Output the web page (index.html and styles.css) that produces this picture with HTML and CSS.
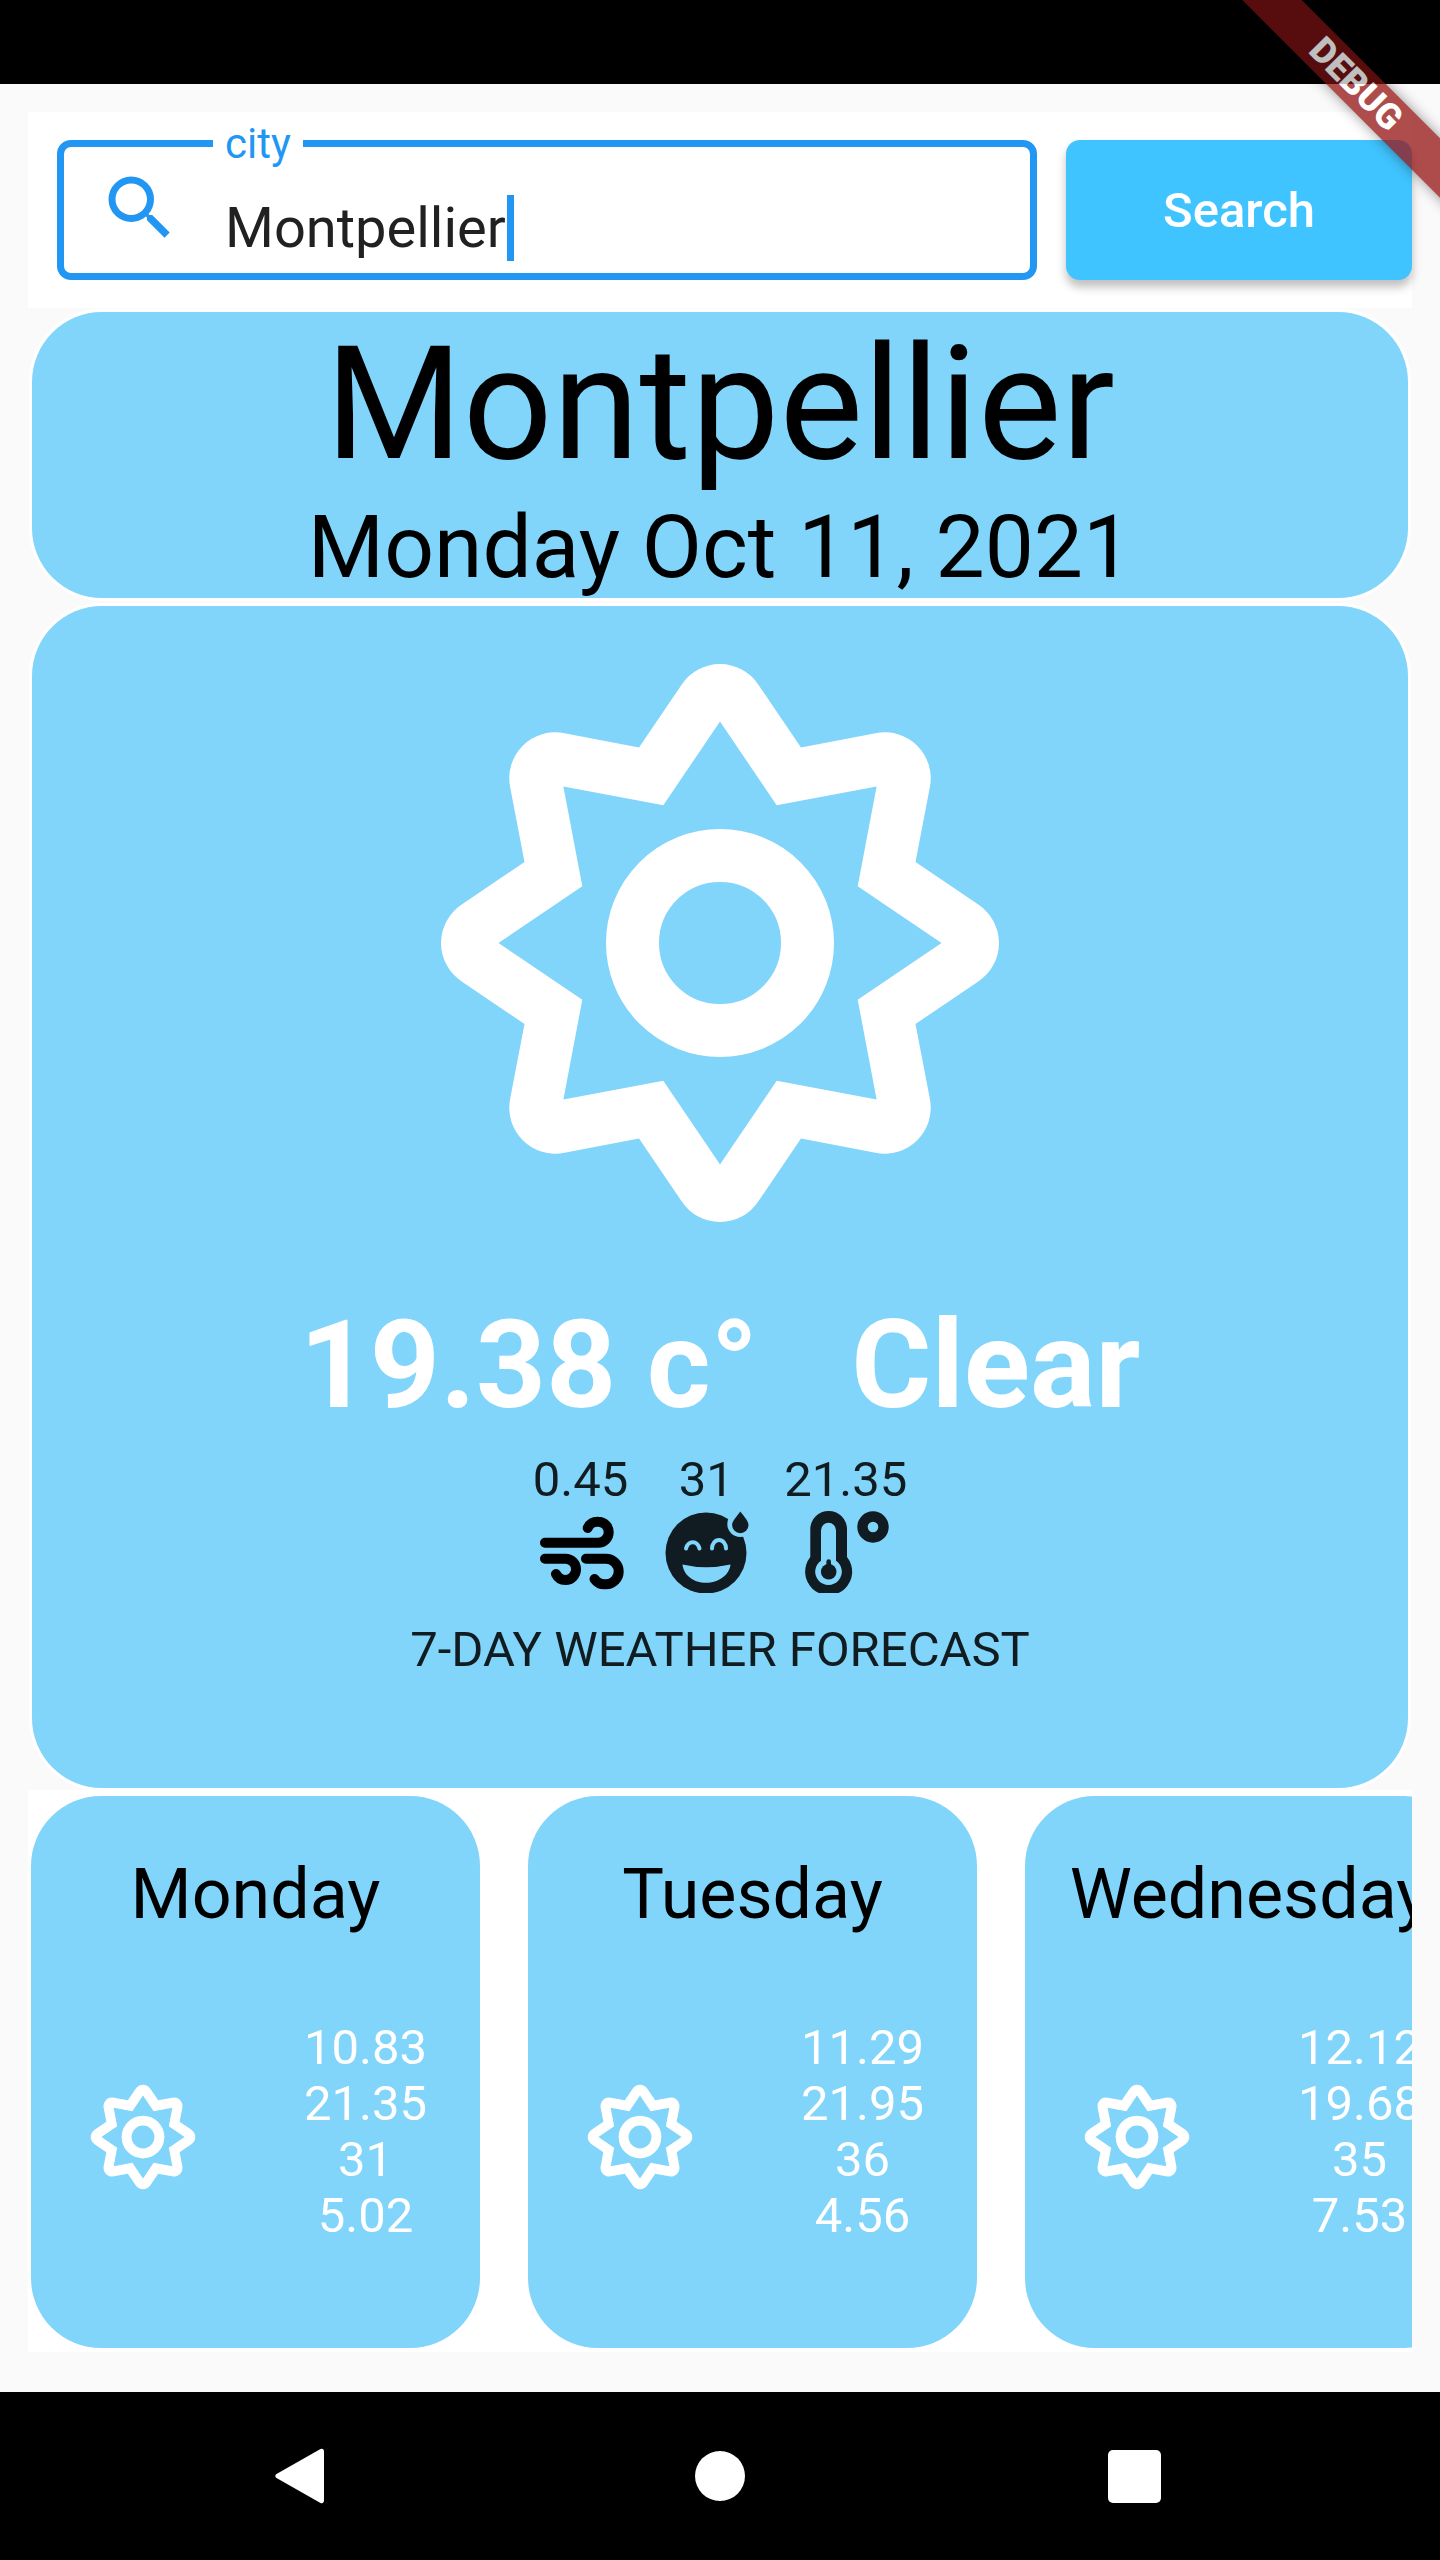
FILE: index.html
```html
<!DOCTYPE html>
<html lang="en">
<head>
    <meta charset="UTF-8">
    <meta name="viewport" content="width=device-width, initial-scale=1.0">
    <title>Weather</title>
    <link rel="stylesheet" href="styles.css">
</head>
<body>
    <svg class="icon-defs" width="0" height="0">
        <symbol id="sun" viewBox="-320 -320 640 640">
            <path fill="#fff" fill-rule="evenodd" d="M-38.4 -258.3A46 46 0 0 1 38.4 -258.3L81 -195.5L155.5 -209.8A46 46 0 0 1 209.8 -155.5L195.5 -81L258.3 -38.4A46 46 0 0 1 258.3 38.4L195.5 81L209.8 155.5A46 46 0 0 1 155.5 209.8L81 195.5L38.4 258.3A46 46 0 0 1 -38.4 258.3L-81 195.5L-155.5 209.8A46 46 0 0 1 -209.8 155.5L-195.5 81L-258.3 38.4A46 46 0 0 1 -258.3 -38.4L-195.5 -81L-209.8 -155.5A46 46 0 0 1 -155.5 -209.8L-81 -195.5ZM0 -221.5L-56.7 -137.7L-156.6 -156.6L-137.7 -56.7L-221.5 0L-137.7 56.7L-156.6 156.6L-56.7 137.7L0 221.5L56.7 137.7L156.6 156.6L137.7 56.7L221.5 0L137.7 -56.7L156.6 -156.6L56.7 -137.7Z"/>
            <circle r="87.5" fill="none" stroke="#fff" stroke-width="53"/>
        </symbol>
    </svg>

    <div class="status-bar"></div>

    <main class="screen">
        <section class="search-row">
            <div class="city-field">
                <span class="city-label">city</span>
                <svg class="search-icon" viewBox="0 0 24 24"><path fill="#2196f3" d="M15.5 14h-.79l-.28-.27A6.47 6.47 0 0 0 16 9.5 6.5 6.5 0 1 0 9.5 16c1.61 0 3.09-.59 4.23-1.57l.27.28v.79l5 4.99L20.49 19l-4.99-5zm-6 0C7.01 14 5 11.99 5 9.5S7.01 5 9.5 5 14 7.01 14 9.5 11.99 14 9.5 14z"/></svg>
                <div class="city-input">
                    <span class="city-value">Montpellier</span><span class="caret"></span>
                </div>
            </div>
            <button class="search-button">Search</button>
        </section>

        <section class="card title-card">
            <h1 class="city-name">Montpellier</h1>
            <div class="city-date">Monday Oct 11, 2021</div>
        </section>

        <section class="card current-card">
            <svg class="sun-large"><use href="#sun"/></svg>
            <div class="current-temp">
                <span>19.38 c°</span>
                <span>Clear</span>
            </div>
            <div class="stats">
                <div class="stat">
                    <div class="stat-value">0.45</div>
                    <svg class="stat-icon stat-wind" viewBox="532 1508 93 84">
                        <path fill="none" stroke="#000" stroke-width="10" stroke-linecap="round" d="M543 1541.7H596.200A10.500 10.500 0 0 0 596.200 1520.700A10.500 10.500 0 0 0 585.700 1527M543 1557.700H563.400A10.600 10.600 0 0 1 563.400 1579A10.600 10.600 0 0 1 554 1573M584 1557.700H603.900A12.800 12.800 0 0 1 603.900 1583.300A12.800 12.800 0 0 1 592.500 1578"/>
                    </svg>
                </div>
                <div class="stat">
                    <div class="stat-value">31</div>
                    <svg class="stat-icon stat-humid" viewBox="659.500 1508 90 84">
                        <circle cx="704.500" cy="1552" r="40.500" fill="#111c22"/>
                        <circle cx="738.800" cy="1523" r="13" fill="#81d4fa"/>
                        <path fill="#111c22" d="M738.800 1510.500C743 1516 747 1520 747 1524A8.200 8.200 0 0 1 730.600 1524C730.600 1520 735 1516 738.800 1510.500Z"/>
                        <path fill="none" stroke="#81d4fa" stroke-width="4" stroke-linecap="round" d="M684.500 1547.500A7 8.500 0 0 1 698 1547.500M710.500 1547.500A7 8.500 0 0 1 724.500 1547.500"/>
                        <path fill="#81d4fa" d="M681 1563.500Q704.500 1569 729 1563.500C728 1574 717 1581.800 704.500 1581.800C692 1581.800 682 1574 681 1563.500Z"/>
                    </svg>
                </div>
                <div class="stat">
                    <div class="stat-value">21.35</div>
                    <svg class="stat-icon stat-feels" viewBox="784 1508 122 84">
                        <path fill="#111c22" fill-rule="evenodd" d="M809.300 1528.300A18.350 18.350 0 0 1 846 1528.300V1556A23.500 23.500 0 1 1 809.300 1556ZM820 1529.200V1559.700A13.300 13.300 0 1 0 835 1559.700V1529.200A7.500 7.500 0 0 0 820 1529.200Z"/>
                        <circle cx="827.700" cy="1570.700" r="7.800" fill="#111c22"/>
                        <rect x="825.400" y="1558.300" width="4.600" height="10" rx="2.300" fill="#111c22"/>
                        <circle cx="872" cy="1526" r="10.500" fill="none" stroke="#111c22" stroke-width="10.400"/>
                    </svg>
                </div>
            </div>
            <div class="forecast-label">7-DAY WEATHER FORECAST</div>
        </section>

        <section class="forecast-row">
            <div class="card day-card">
                <div class="day-name">Monday</div>
                <div class="day-body">
                    <svg class="sun-small"><use href="#sun"/></svg>
                    <div class="day-values"><div>10.83</div><div>21.35</div><div>31</div><div>5.02</div></div>
                </div>
            </div>
            <div class="card day-card">
                <div class="day-name">Tuesday</div>
                <div class="day-body">
                    <svg class="sun-small"><use href="#sun"/></svg>
                    <div class="day-values"><div>11.29</div><div>21.95</div><div>36</div><div>4.56</div></div>
                </div>
            </div>
            <div class="card day-card">
                <div class="day-name">Wednesday</div>
                <div class="day-body">
                    <svg class="sun-small"><use href="#sun"/></svg>
                    <div class="day-values"><div>12.12</div><div>19.68</div><div>35</div><div>7.53</div></div>
                </div>
            </div>
        </section>
    </main>

    <nav class="nav-bar">
        <svg class="nav-back" viewBox="0 0 50 56"><path fill="#fff" d="M49 3V53A2.500 2.500 0 0 1 45.500 55L1.500 30A2.300 2.300 0 0 1 1.500 26L45.500 1A2.500 2.500 0 0 1 49 3Z"/></svg>
        <span class="nav-home"></span>
        <span class="nav-recent"></span>
    </nav>

    <div class="debug-banner"><span>DEBUG</span></div>
</body>
</html>
```

FILE: styles.css
```css
/* weather screen */
html, body {
    margin: 0;
    padding: 0;
}
body {
    position: relative;
    width: 1440px;
    height: 2560px;
    overflow: hidden;
    display: flex;
    flex-direction: column;
    font-family: Roboto, "Liberation Sans", sans-serif;
    background-color: #fafafa;
}
.icon-defs {
    position: absolute;
}
.status-bar {
    height: 84px;
    background-color: #000;
}
.screen {
    flex: 1;
    padding: 28px 28px 0;
    display: flex;
    flex-direction: column;
}

.search-row {
    display: flex;
    gap: 29px;
    height: 196px;
    box-sizing: border-box;
    padding: 28px 0 28px 29px;
    background-color: #fff;
}
.city-field {
    position: relative;
    width: 980px;
    box-sizing: border-box;
    border: 7px solid #2196f3;
    border-radius: 14px;
    display: flex;
    align-items: center;
    padding: 0 0 0 34px;
}
.city-label {
    position: absolute;
    top: -27px;
    left: 149px;
    padding: 0 12px;
    font-size: 42px;
    line-height: 48px;
    color: #2196f3;
    background-color: #fff;
}
.search-icon {
    width: 84px;
    height: 84px;
    margin: -4px 43px 0 0;
    flex-shrink: 0;
}
.city-input {
    display: flex;
    align-items: center;
    margin-top: 36px;
}
.city-value {
    font-size: 56px;
    color: #212121;
}
.caret {
    width: 7px;
    height: 66px;
    margin-left: 1px;
    background-color: #2196f3;
}
.search-button {
    width: 346px;
    border: none;
    border-radius: 14px;
    background-color: #40c4ff;
    color: #fff;
    font-family: Roboto, sans-serif;
    font-size: 49px;
    font-weight: 500;
    box-shadow: 0 7px 10px rgba(0,0,0,0.25);
}

.card {
    background-color: #81d4fa;
    border-radius: 70px;
    box-shadow: 0 0 0 3px #fff;
}
.title-card {
    margin: 4px 4px 0;
    height: 286px;
    text-align: center;
    color: #000;
}
.city-name {
    margin: 0;
    font-size: 157.5px;
    font-weight: 400;
    line-height: 185px;
}
.city-date {
    font-size: 87.5px;
    line-height: 101px;
}

.current-card {
    margin: 8px 4px 0;
    height: 1182px;
    display: flex;
    flex-direction: column;
    align-items: center;
}
.sun-large {
    width: 640px;
    height: 640px;
    margin-top: 17px;
    flex-shrink: 0;
}
.current-temp {
    display: flex;
    gap: 93px;
    margin-top: 30px;
    font-size: 122.5px;
    font-weight: 700;
    line-height: 144px;
    color: #fff;
}
.stats {
    display: flex;
    gap: 33px;
    margin-top: 14px;
}
.stat {
    display: flex;
    flex-direction: column;
    align-items: center;
    color: rgba(0,0,0,0.87);
}
.stat-value {
    font-size: 49px;
    line-height: 58px;
}
.stat-icon {
    height: 84px;
}
.stat-wind {
    width: 93px;
}
.stat-humid {
    width: 90px;
}
.stat-feels {
    width: 122px;
}
.forecast-label {
    margin-top: 28px;
    font-size: 49px;
    line-height: 58px;
    color: rgba(0,0,0,0.87);
}

.forecast-row {
    display: flex;
    gap: 48px;
    overflow: hidden;
    margin-top: 2px;
    height: 562px;
    box-sizing: border-box;
    padding: 6px 0 4px 3px;
    background-color: #fff;
}
.day-card {
    width: 449px;
    flex-shrink: 0;
}
.day-name {
    margin-top: 57px;
    font-size: 70px;
    line-height: 82px;
    text-align: center;
    color: #000;
    white-space: nowrap;
}
.day-body {
    display: flex;
    align-items: center;
    justify-content: space-between;
    margin-top: 85px;
    padding: 0 53px 0 52px;
}
.sun-small {
    width: 120px;
    height: 120px;
    margin-top: 10px;
}
.day-values {
    font-size: 49px;
    line-height: 56px;
    text-align: center;
    color: #fff;
}

.nav-bar {
    height: 168px;
    display: flex;
    align-items: center;
    background-color: #000;
}
.nav-back {
    width: 50px;
    height: 56px;
    margin-left: 275px;
}
.nav-home {
    width: 50px;
    height: 50px;
    margin-left: 370px;
    border-radius: 50%;
    background-color: #fff;
}
.nav-recent {
    width: 53px;
    height: 53px;
    margin-left: 363px;
    border-radius: 5px;
    background-color: #fff;
}

.debug-banner {
    position: absolute;
    top: 0;
    right: 0;
    width: 240px;
    height: 240px;
    overflow: hidden;
    pointer-events: none;
}
.debug-banner span {
    position: absolute;
    top: 63px;
    left: -14px;
    width: 340px;
    height: 42px;
    line-height: 42px;
    text-align: center;
    transform: rotate(45deg);
    font-size: 35.7px;
    font-weight: 900;
    color: #fff;
    background-color: rgba(151,23,23,0.77);
    box-shadow: 0 0 14px rgba(0,0,0,0.4);
}
/* status bar dims what lies under it */
.debug-banner::after {
    content: "";
    position: absolute;
    top: 0;
    left: 0;
    right: 0;
    height: 84px;
    background-color: rgba(0,0,0,0.25);
}
```
